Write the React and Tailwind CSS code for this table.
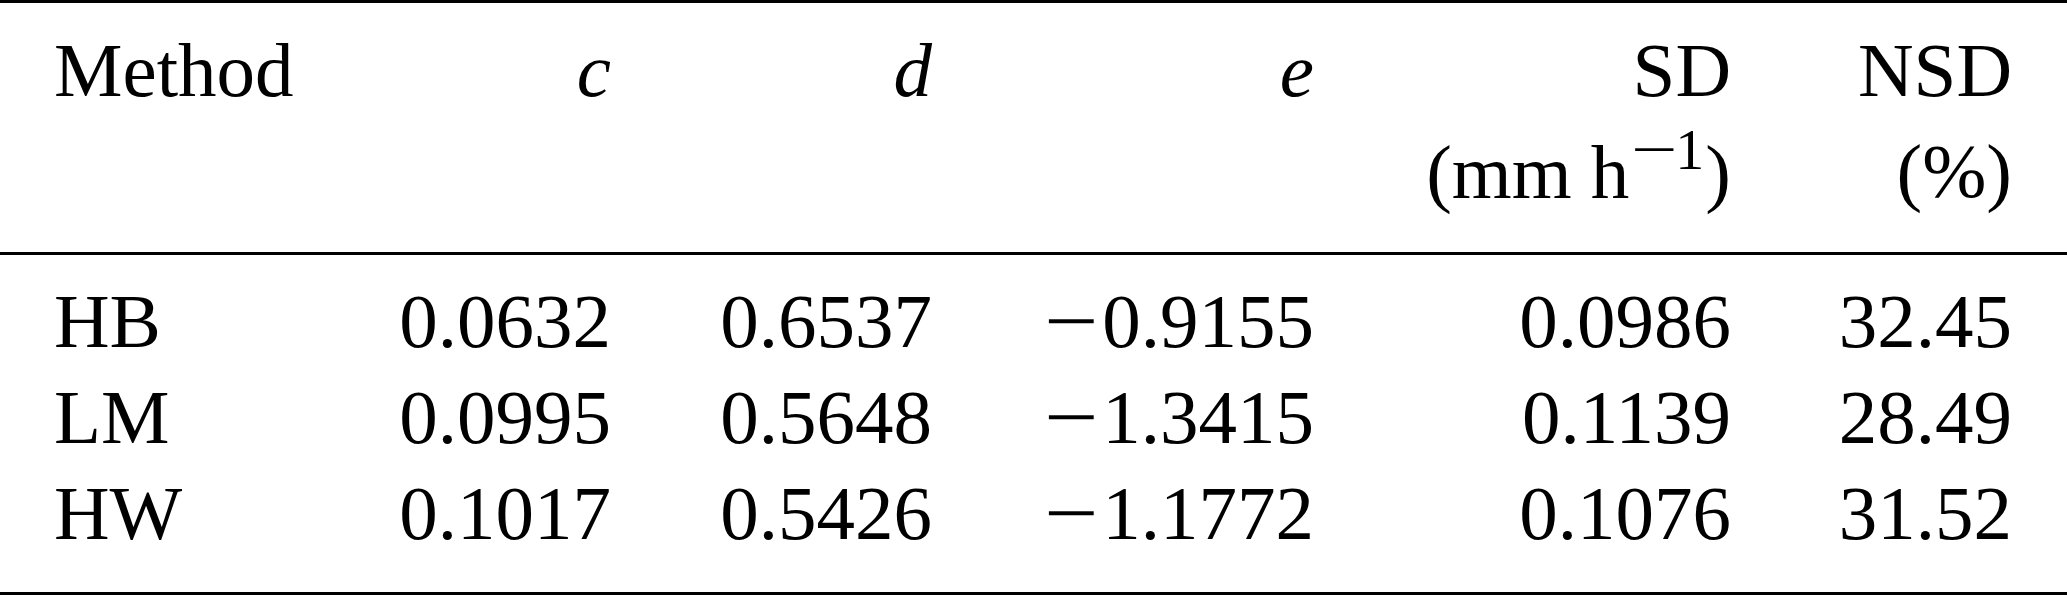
import React from 'react';

const rows = [
    { method: 'HB', c: '0.0632', d: '0.6537', e: '0.9155', sd: '0.0986', nsd: '32.45' },
    { method: 'LM', c: '0.0995', d: '0.5648', e: '1.3415', sd: '0.1139', nsd: '28.49' },
    { method: 'HW', c: '0.1017', d: '0.5426', e: '1.1772', sd: '0.1076', nsd: '31.52' },
];

const grid = 'grid grid-cols-[250px_307px_321px_382px_417px_281px]';

// TeX-style minus: wider than the font's own glyph
const Minus = () => (
    <span className="inline-block w-[58px] text-left">
        <span className="inline-block origin-left scale-x-[1.25]">{'\u2212'}</span>
    </span>
);

const App = () => {
    return (
        <div className="w-[2067px] h-[595px] bg-white text-black font-['Liberation_Serif',serif] text-[77px]">
            <div className="h-[3px] bg-black" />

            {/* header */}
            <div className={`${grid} pl-[54px] pr-[55px] pt-[17px] pb-[29px] leading-[101px]`}>
                <div>Method</div>
                <div className="text-right italic">c</div>
                <div className="text-right italic">d</div>
                <div className="text-right italic">e</div>
                <div className="text-right">
                    <div>SD</div>
                    <div className="whitespace-nowrap">
                        (mm h<span className="text-[58px] leading-none align-[29px] ml-[2px] mr-[1px]"><span className="inline-block w-[44px] text-left"><span className="inline-block origin-left scale-x-[1.42]">{'\u2212'}</span></span>1</span>)
                    </div>
                </div>
                <div className="text-right">
                    <div>NSD</div>
                    <div>(%)</div>
                </div>
            </div>

            <div className="h-[3px] bg-black" />

            {/* body */}
            <div className="pl-[54px] pr-[55px] pt-[18px] pb-[31px] leading-[96px]">
                {rows.map((r) => (
                    <div key={r.method} className={grid}>
                        <div>{r.method}</div>
                        <div className="text-right">{r.c}</div>
                        <div className="text-right">{r.d}</div>
                        <div className="text-right whitespace-nowrap"><Minus />{r.e}</div>
                        <div className="text-right">{r.sd}</div>
                        <div className="text-right">{r.nsd}</div>
                    </div>
                ))}
            </div>

            <div className="h-[3px] bg-black" />
        </div>
    );
};

export default App;
